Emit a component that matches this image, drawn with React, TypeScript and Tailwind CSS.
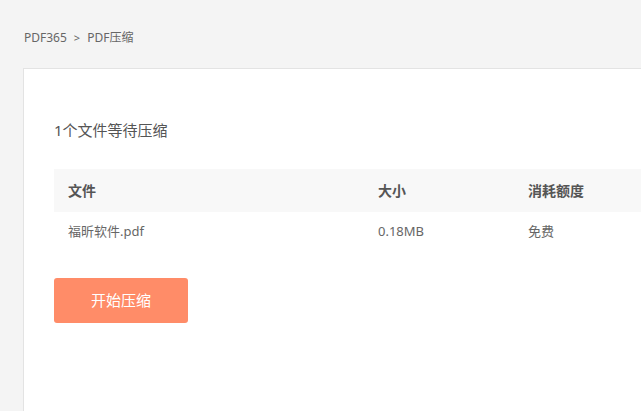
export default function App() {
  const rows = [{ name: "福昕软件.pdf", size: "0.18MB", cost: "免费" }];

  return (
    <main
      className="h-[411px] w-[641px] overflow-hidden bg-[#f4f4f4] text-[#666]"
      style={{ fontFamily: '"Noto Sans", "Noto Sans CJK SC", sans-serif' }}
    >
      {/* 面包屑 */}
      <nav className="flex items-center gap-[7px] pl-[24px] pt-[30px] text-[12px] leading-4">
        <span>PDF365</span>
        <span className="text-[11px]">&gt;</span>
        <span>PDF压缩</span>
      </nav>

      <div className="pl-[23px] pt-[22px]">
        <section className="h-[400px] w-[1200px] border-l border-t border-[#e3e3e3] bg-white pl-[30px] pt-[51px]">
          <h2 className="text-[15px] leading-5 text-[#555]">1个文件等待压缩</h2>

          <div className="mt-[29px] w-[900px]">
            <div className="grid h-[43px] grid-cols-[310px_150px_1fr] items-center bg-[#f8f8f8] pl-[14px] text-[14px] font-bold text-[#555]">
              <span>文件</span>
              <span>大小</span>
              <span>消耗额度</span>
            </div>

            {rows.map((row) => (
              <div
                key={row.name}
                className="grid h-[40px] grid-cols-[310px_150px_1fr] items-center pl-[14px] text-[13px] text-[#666]"
              >
                <span>{row.name}</span>
                <span>{row.size}</span>
                <span>{row.cost}</span>
              </div>
            ))}
          </div>

          <button className="mt-[26px] flex h-[45px] w-[134px] items-center justify-center rounded-[3px] bg-[#ff8c68] text-[15px] text-white">
            开始压缩
          </button>
        </section>
      </div>
    </main>
  );
}
